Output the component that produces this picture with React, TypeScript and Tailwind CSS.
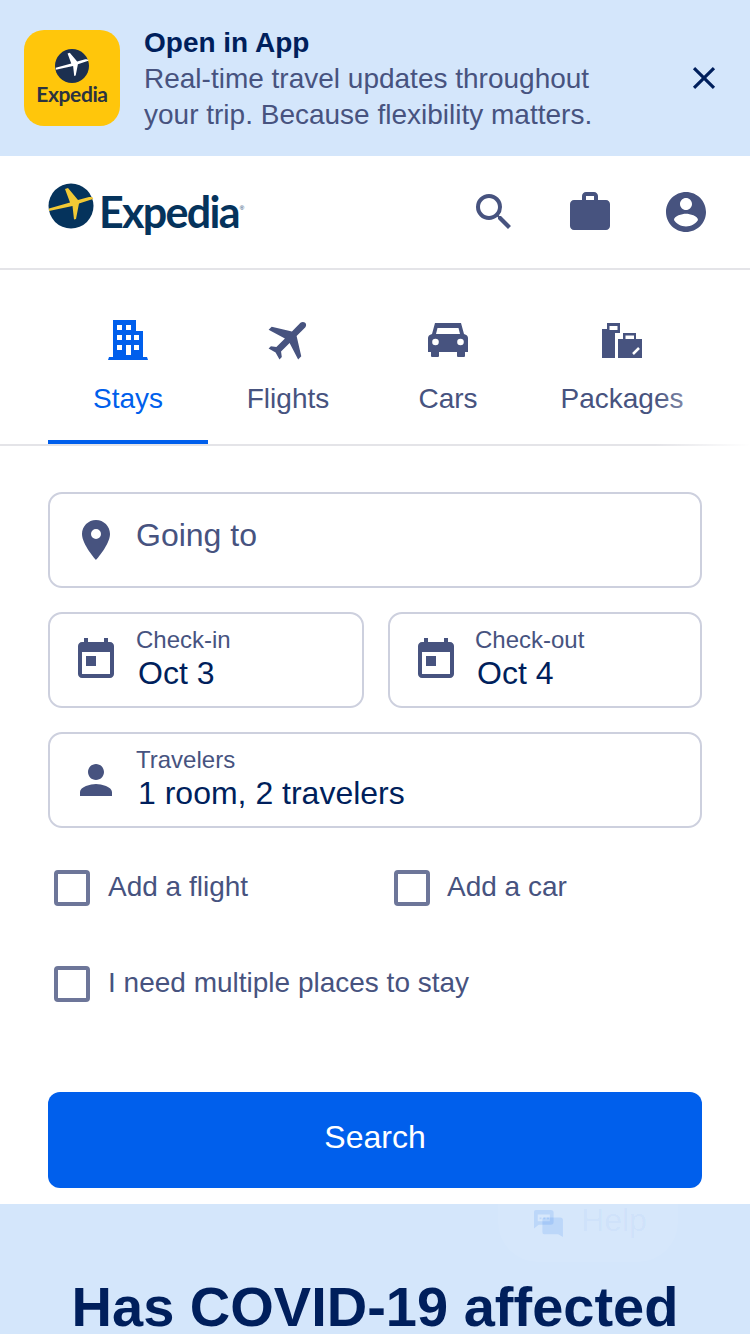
import type { ReactNode } from "react";

const PATHS = {
  close: "M19 6.41L17.59 5 12 10.59 6.41 5 5 6.41 10.59 12 5 17.59 6.41 19 12 13.41 17.59 19 19 17.59 13.41 12z",
  search:
    "M15.5 14h-.79l-.28-.27A6.471 6.471 0 0 0 16 9.5 6.5 6.5 0 1 0 9.5 16c1.61 0 3.09-.59 4.23-1.57l.27.28v.79l5 4.99L20.49 19l-4.99-5zm-6 0C7.01 14 5 11.99 5 9.5S7.01 5 9.5 5 14 7.01 14 9.5 11.99 14 9.5 14z",
  work: "M20 6h-4V4c0-1.11-.89-2-2-2h-4c-1.11 0-2 .89-2 2v2H4c-1.11 0-1.99.89-1.99 2L2 19c0 1.11.89 2 2 2h16c1.11 0 2-.89 2-2V8c0-1.11-.89-2-2-2zm-6 0h-4V4h4v2z",
  account:
    "M12 2C6.48 2 2 6.48 2 12s4.48 10 10 10 10-4.48 10-10S17.52 2 12 2zm0 3c1.66 0 3 1.34 3 3s-1.34 3-3 3-3-1.34-3-3 1.34-3 3-3zm0 14.2c-2.5 0-4.71-1.28-6-3.22.03-1.99 4-3.08 6-3.08 1.99 0 5.97 1.09 6 3.08-1.29 1.94-3.5 3.22-6 3.22z",
  place: "M12 2C8.13 2 5 5.13 5 9c0 5.25 7 13 7 13s7-7.75 7-13c0-3.87-3.13-7-7-7zm0 9.5a2.5 2.5 0 0 1 0-5 2.5 2.5 0 0 1 0 5z",
  today: "M19 3h-1V1h-2v2H8V1H6v2H5c-1.11 0-1.99.9-1.99 2L3 19c0 1.1.89 2 2 2h14c1.1 0 2-.9 2-2V5c0-1.1-.9-2-2-2zm0 16H5V8h14v11zM7 10h5v5H7z",
  person: "M12 12c2.21 0 4-1.79 4-4s-1.79-4-4-4-4 1.79-4 4 1.79 4 4 4zm0 2c-2.67 0-8 1.34-8 4v2h16v-2c0-2.66-5.33-4-8-4z",
};

const PLANE = "M-22 2.5L-1 -3.5L-6 -17L-3 -18L7 -6L18 -9Q23 -9.5 22 -7L8 -2.5L5 13L3 13.5L1.5 0L-22 5Z";

function Icon({ d, className = "" }: { d: string; className?: string }) {
  return (
    <svg viewBox="0 0 24 24" className={`w-12 h-12 shrink-0 fill-current ${className}`}>
      <path d={d} />
    </svg>
  );
}

function StaysIcon() {
  return (
    <svg viewBox="0 0 48 48" className="w-12 h-12 fill-current">
      <path
        fillRule="evenodd"
        d="M9 4h23v11h7v26h4l1 3H4l1-3h4zM13 9v5h5V9zM22 9v5h5V9zM13 19v5h5v-5zM22 19v5h5v-5zM30 19v5h5v-5zM13 29v5h5v-5zM22 29v10h5V29zM30 29v5h5v-5z"
      />
    </svg>
  );
}

function FlightIcon() {
  return (
    <svg viewBox="0 0 24 24" className="w-12 h-12 fill-current">
      <path
        transform="translate(12.800 11.200) scale(1.1) rotate(45) translate(-11.500 -12)"
        d="M21 16v-2l-8-5V3.500c0-.83-.67-1.500-1.500-1.500S10 2.670 10 3.500V9l-8 5v2l8-2.500V19l-2 1.500V22l3.500-1 3.500 1v-1.500L13 19v-5.500l8 2.500z"
      />
    </svg>
  );
}

function CarIcon() {
  return (
    <svg viewBox="0 0 48 48" className="w-12 h-12 fill-current">
      <path d="M11 7h26l3 11q4 1 4 4v14h-3v4q0 1-1 1h-6q-1 0-1-1v-4H15v4q0 1-1 1H8q-1 0-1-1v-4H4V22q0-3 4-4z" />
      <path d="M13.500 12h21l1.500 6H12z" fill="#fff" />
      <circle cx="11.500" cy="26" r="3.300" fill="#fff" />
      <circle cx="36.500" cy="26" r="3.300" fill="#fff" />
    </svg>
  );
}

function PackagesIcon() {
  return (
    <svg viewBox="0 0 48 48" className="w-12 h-12 fill-current">
      <path fillRule="evenodd" d="M9 7h13v10h-5v25H4V13h5zM11.500 10v4H19.500v-4z" />
      <path fillRule="evenodd" d="M25 17h13v6h6v19H20V23h5zM27.500 19.500V23H36v-3.500z" />
      <path d="M35 38l6-6" stroke="#fff" strokeWidth="2.500" fill="none" />
    </svg>
  );
}

function TabItem({
  icon,
  label,
  active,
  className = "",
}: {
  icon: ReactNode;
  label: string;
  active?: boolean;
  className?: string;
}) {
  return (
    <div
      className={`flex flex-col items-center pt-[46px] h-full ${active ? "text-[#005fec] border-b-4 border-[#005fec]" : "text-[#47537f]"} ${className}`}
    >
      {icon}
      <span className="text-[28px] leading-9 mt-[17px]">{label}</span>
    </div>
  );
}

function Field({
  icon,
  label,
  value,
  className = "",
  textClass = "ml-4",
}: {
  icon: string;
  label: string;
  value: string;
  className?: string;
  textClass?: string;
}) {
  return (
    <div className={`h-24 flex items-center pl-[22px] border-2 border-[#cdd0de] rounded-[14px] ${className}`}>
      <Icon d={icon} className="text-[#47537f]" />
      <div className={`-mt-[6px] ${textClass}`}>
        <div className="text-2xl leading-8 text-[#47537f]">{label}</div>
        <div className="text-[32px] leading-[34px] text-[#001f5c] ml-[2px]">{value}</div>
      </div>
    </div>
  );
}

function Check({
  label,
  className = "",
  gapClass = "gap-[18px]",
}: {
  label: string;
  className?: string;
  gapClass?: string;
}) {
  return (
    <label className={`flex items-center h-[42px] text-[28px] text-[#47537f] ${gapClass} ${className}`}>
      <span className="w-9 h-9 border-4 border-[#6d7699] rounded-[4px] bg-white" />
      <span className="-mt-[2px]">{label}</span>
    </label>
  );
}

export default function App() {
  return (
    <div className="relative w-[750px] h-[1334px] overflow-hidden bg-white font-['Liberation_Sans',Arial,sans-serif]">
      {/* app banner */}
      <div className="h-[156px] bg-[#d4e6fb] flex items-center pl-6">
        <div className="w-24 h-24 rounded-[20px] bg-[#ffc60b] flex flex-col items-center pt-[19px] shrink-0">
          <svg viewBox="-23 -23 46 46" className="w-[34px] h-[34px]">
            <circle r="23" fill="#1c3050" />
            <path d={PLANE} fill="#fff" />
          </svg>
          <span className="font-['Lato',sans-serif] font-bold text-[21px] leading-7 -tracking-[0.4px] text-[#2b3340] -mt-[3px]">
            Expedia
          </span>
        </div>
        <div className="ml-6 w-[480px] mt-[2px]">
          <div className="text-[28px] leading-9 font-bold text-[#001f5c]">Open in App</div>
          <div className="text-[28px] leading-9 text-[#47537f]">
            Real-time travel updates throughout your trip. Because flexibility matters.
          </div>
        </div>
        <svg viewBox="0 0 24 24" className="w-[38px] h-[38px] ml-[61px] fill-[#001f5c] shrink-0">
          <path d={PATHS.close} />
        </svg>
      </div>

      {/* header */}
      <header className="h-[114px] border-b-2 border-[#e4e4e8] flex items-center pl-12 pr-10">
        <div className="flex items-start h-[60px] mt-[-2px]">
          <svg viewBox="-23 -23 46 46" className="w-[46px] h-[46px] shrink-0 mt-[2px]">
            <circle r="22.500" fill="#05335c" />
            <path d={PLANE} fill="#f2c935" />
          </svg>
          <span className="font-['Lato',sans-serif] font-bold text-[43px] leading-[50px] -tracking-[1.700px] text-[#05335c] ml-[5px] mt-[6px]">
            Expedia
          </span>
          <span className="text-[6px] leading-none text-[#05335c] mt-[24px] ml-[1px]">®</span>
        </div>
        <div className="ml-auto flex items-center gap-12 text-[#47537f]">
          <Icon d={PATHS.search} />
          <Icon d={PATHS.work} />
          <Icon d={PATHS.account} />
        </div>
      </header>

      {/* tabs */}
      <div className="relative h-[176px] border-b-2 border-[#e4e4e8] flex pl-12">
        <TabItem icon={<StaysIcon />} label="Stays" active className="w-40" />
        <TabItem icon={<FlightIcon />} label="Flights" className="w-40" />
        <TabItem icon={<CarIcon />} label="Cars" className="w-40" />
        <TabItem icon={<PackagesIcon />} label="Packages" className="w-[188px]" />
        <div className="absolute right-0 top-0 -bottom-[2px] w-24 bg-gradient-to-r from-white/0 to-white" />
      </div>

      {/* search form */}
      <div className="px-12 pt-[46px]">
        <div className="h-24 flex items-center pl-[22px] border-2 border-[#cdd0de] rounded-[14px]">
          <Icon d={PATHS.place} className="text-[#47537f]" />
          <span className="ml-4 -mt-[10px] text-[32px] text-[#47537f]">Going to</span>
        </div>
        <div className="flex gap-6 mt-6">
          <Field icon={PATHS.today} label="Check-in" value="Oct 3" className="w-[316px]" />
          <Field icon={PATHS.today} label="Check-out" value="Oct 4" className="w-[314px]" textClass="ml-[15px]" />
        </div>
        <Field icon={PATHS.person} label="Travelers" value="1 room, 2 travelers" className="mt-6" />

        <div className="flex mt-[39px] pl-[6px]">
          <Check label="Add a flight" className="w-[340px]" />
          <Check label="Add a car" gapClass="gap-[17px]" />
        </div>
        <Check label="I need multiple places to stay" className="mt-[54px] pl-[6px]" />

        <button className="w-full h-24 mt-[87px] pb-[6px] rounded-xl bg-[#005fec] text-white text-[32px]">Search</button>
      </div>

      {/* covid section */}
      <section className="mt-4 h-[130px] bg-[#d4e6fb] text-center pt-[76px]">
        <h2 className="text-[56px] leading-[54px] font-bold text-[#001f5c] whitespace-nowrap">Has COVID-19 affected</h2>
      </section>

      {/* floating help */}
      <div className="absolute left-[498px] top-[1188px] w-[180px] h-[74px] pb-[10px] pl-[4px] rounded-b-[40px] bg-white/[0.06] flex items-center justify-center gap-[18px]">
        <svg viewBox="0 0 32 30" className="w-[30px] h-7 mt-[6px] fill-[#005fec]">
          <path
            opacity="0.12"
            d="M12 9h17a3 3 0 0 1 3 3v18l-5-3H12a2 2 0 0 1-2-2V11a2 2 0 0 1 2-2z"
          />
          <path
            opacity="0.12"
            fillRule="evenodd"
            d="M3 1h16a3 3 0 0 1 3 3v10a3 3 0 0 1-3 3H6l-5 4V3a2 2 0 0 1 2-2zM5 6v7h13V6zM7 9h2v2H7zM11 9h2v2h-2zM15 9h2v2h-2z"
          />
        </svg>
        <span className="text-[32px] text-[#005fec]/[0.05]">Help</span>
      </div>
    </div>
  );
}
